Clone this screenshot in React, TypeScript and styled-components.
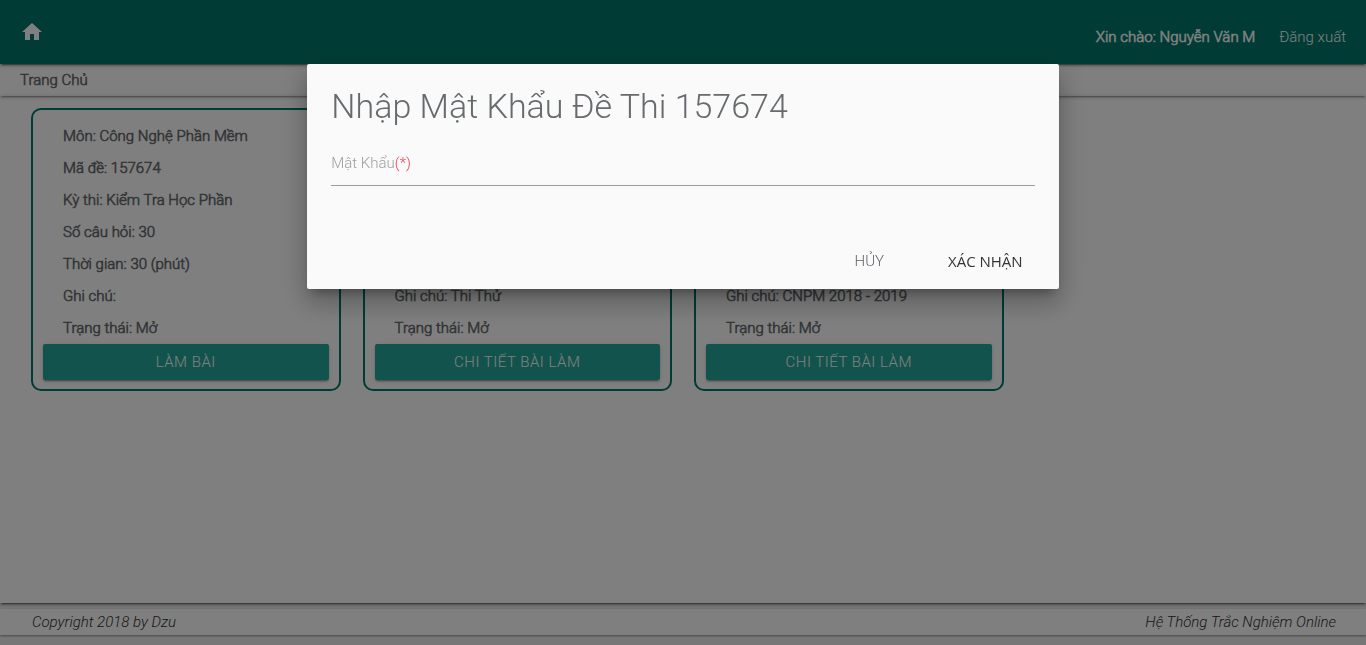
import React from "react";
import styled, { createGlobalStyle } from "styled-components";
import { MdHome } from "react-icons/md";

const Global = createGlobalStyle`
  * { box-sizing: border-box; }
  html, body { margin: 0; }
  body {
    background: #fff;
    color: #676b6e;
    font: 300 15px/24px Roboto, sans-serif;
  }
  a { color: inherit; text-decoration: none; }
`;

const Page = styled.div`
  display: flex;
  flex-direction: column;
  min-height: 100vh;
`;

const Nav = styled.header`
  display: flex;
  flex: none;
  justify-content: space-between;
  align-items: center;
  height: 64px;
  padding: 0 20px;
  background: #00796b;
  color: #fff;
  box-shadow: 0 2px 2px rgba(0, 0, 0, 0.2), 0 1px 5px rgba(0, 0, 0, 0.2), 0 3px 1px -2px rgba(0, 0, 0, 0.3);
  z-index: 3;
`;

const HomeLink = styled.a`
  display: flex;
`;

const Account = styled.div`
  display: flex;
  gap: 24px;
  padding-top: 10px;
`;

const Greeting = styled.span`
  -webkit-text-stroke: 0.6px currentColor;
`;

const Crumb = styled.div`
  flex: none;
  height: 32px;
  padding: 0 20px;
  line-height: 32px;
  -webkit-text-stroke: 0.6px currentColor;
  box-shadow: 0 2px 2px rgba(0, 0, 0, 0.14), 0 1px 5px rgba(0, 0, 0, 0.12), 0 3px 1px -2px rgba(0, 0, 0, 0.2);
  z-index: 2;
`;

const Main = styled.main`
  display: grid;
  flex: 1;
  grid-template-columns: repeat(4, 1fr);
  align-content: start;
  gap: 22px;
  padding: 12px 31px;
  background: #fff;
  box-shadow: 0 2px 2px rgba(0, 0, 0, 0.2), 0 1px 5px rgba(0, 0, 0, 0.2), 0 3px 1px -2px rgba(0, 0, 0, 0.3);
  z-index: 1;
`;

const Card = styled.article`
  padding: 10px 10px 9px;
  border: 2px solid #00796b;
  border-radius: 10px;
`;

const Info = styled.p`
  margin: 0;
  padding-left: 20px;
  line-height: 32px;
  -webkit-text-stroke: 0.6px currentColor;
`;

const CardButton = styled.button`
  display: block;
  width: 100%;
  height: 36px;
  border: 0;
  border-radius: 2px;
  background: #26a69a;
  color: #fff;
  font: inherit;
  letter-spacing: 0.5px;
  text-transform: uppercase;
  box-shadow: 0 2px 2px rgba(0, 0, 0, 0.14), 0 1px 5px rgba(0, 0, 0, 0.12), 0 3px 1px -2px rgba(0, 0, 0, 0.2);
`;

const Footer = styled.footer`
  flex: none;
  padding: 6px 0 10px;
  background: #eee;
`;

const FooterBar = styled.div`
  display: flex;
  justify-content: space-between;
  height: 26px;
  padding: 0 30px 0 32px;
  background: #fff;
  color: #303030;
  font-style: italic;
  line-height: 26px;
  box-shadow: 0 1px 2px rgba(0, 0, 0, 0.4);
`;

const Overlay = styled.div`
  position: fixed;
  inset: 0;
  padding-top: 64px;
  background: rgba(0, 0, 0, 0.5);
  z-index: 10;
`;

const Modal = styled.form`
  width: 55%;
  margin: 0 auto;
  border-radius: 2px;
  background: #fafafa;
  box-shadow: 0 16px 24px 2px rgba(0, 0, 0, 0.14), 0 6px 30px 5px rgba(0, 0, 0, 0.12), 0 8px 10px -5px rgba(0, 0, 0, 0.3);
`;

const ModalBody = styled.div`
  padding: 24px 24px 47px;
`;

const Title = styled.h4`
  margin: 0 0 20px;
  font-size: 34px;
  font-weight: 300;
  line-height: 37px;
`;

const Field = styled.div`
  display: flex;
  height: 41px;
  border-bottom: 1px solid #9e9e9e;
`;

const Label = styled.label`
  padding-top: 6px;
  color: #9e9e9e;
`;

const Required = styled.span`
  color: #f44350;
`;

const Password = styled.input`
  flex: 1;
  border: 0;
  background: transparent;
  font: inherit;
  outline: 0;
`;

const Actions = styled.div`
  display: flex;
  justify-content: flex-end;
  align-items: center;
  gap: 40px;
  height: 56px;
  padding: 0 24px;
`;

const FlatButton = styled.button<{ $primary?: boolean }>`
  height: 36px;
  padding: 0 12px;
  border: 0;
  background: transparent;
  color: ${(p) => (p.$primary ? "#343434" : "#5f6368")};
  font: ${(p) => (p.$primary ? '400 15px/36px "Open Sans"' : "300 15px/36px Roboto")}, sans-serif;
  text-transform: uppercase;
`;

const exams = [
  { subject: "Công Nghệ Phần Mềm", code: "157674", name: "Kiểm Tra Học Phần", note: "", action: "Làm bài" },
  { subject: "Công Nghệ Phần Mềm", code: "157675", name: "Kiểm Tra Học Phần", note: "Thi Thử", action: "Chi tiết bài làm" },
  { subject: "Công Nghệ Phần Mềm", code: "157676", name: "Kiểm Tra Học Phần", note: "CNPM 2018 - 2019", action: "Chi tiết bài làm" },
];

export default function App() {
  return (
    <>
      <Global />
      <Page>
        <Nav>
          <HomeLink href="#" aria-label="Trang Chủ"><MdHome size={24} /></HomeLink>
          <Account>
            <Greeting>Xin chào: Nguyễn Văn M</Greeting>
            <a href="#">Đăng xuất</a>
          </Account>
        </Nav>
        <Crumb>Trang Chủ</Crumb>
        <Main>
          {exams.map((e) => (
            <Card key={e.code}>
              <Info>Môn: {e.subject}</Info>
              <Info>Mã đề: {e.code}</Info>
              <Info>Kỳ thi: {e.name}</Info>
              <Info>Số câu hỏi: 30</Info>
              <Info>Thời gian: 30 (phút)</Info>
              <Info>Ghi chú: {e.note}</Info>
              <Info>Trạng thái: Mở</Info>
              <CardButton type="button">{e.action}</CardButton>
            </Card>
          ))}
        </Main>
        <Footer>
          <FooterBar>
            <span>Copyright 2018 by Dzu</span>
            <span>Hệ Thống Trắc Nghiệm Online</span>
          </FooterBar>
        </Footer>
      </Page>
      <Overlay>
        <Modal role="dialog" aria-labelledby="modal-title">
          <ModalBody>
            <Title id="modal-title">Nhập Mật Khẩu Đề Thi 157674</Title>
            <Field>
              <Label htmlFor="password">Mật Khẩu<Required>(*)</Required></Label>
              <Password id="password" type="password" />
            </Field>
          </ModalBody>
          <Actions>
            <FlatButton type="button">Hủy</FlatButton>
            <FlatButton type="button" $primary>Xác nhận</FlatButton>
          </Actions>
        </Modal>
      </Overlay>
    </>
  );
}
